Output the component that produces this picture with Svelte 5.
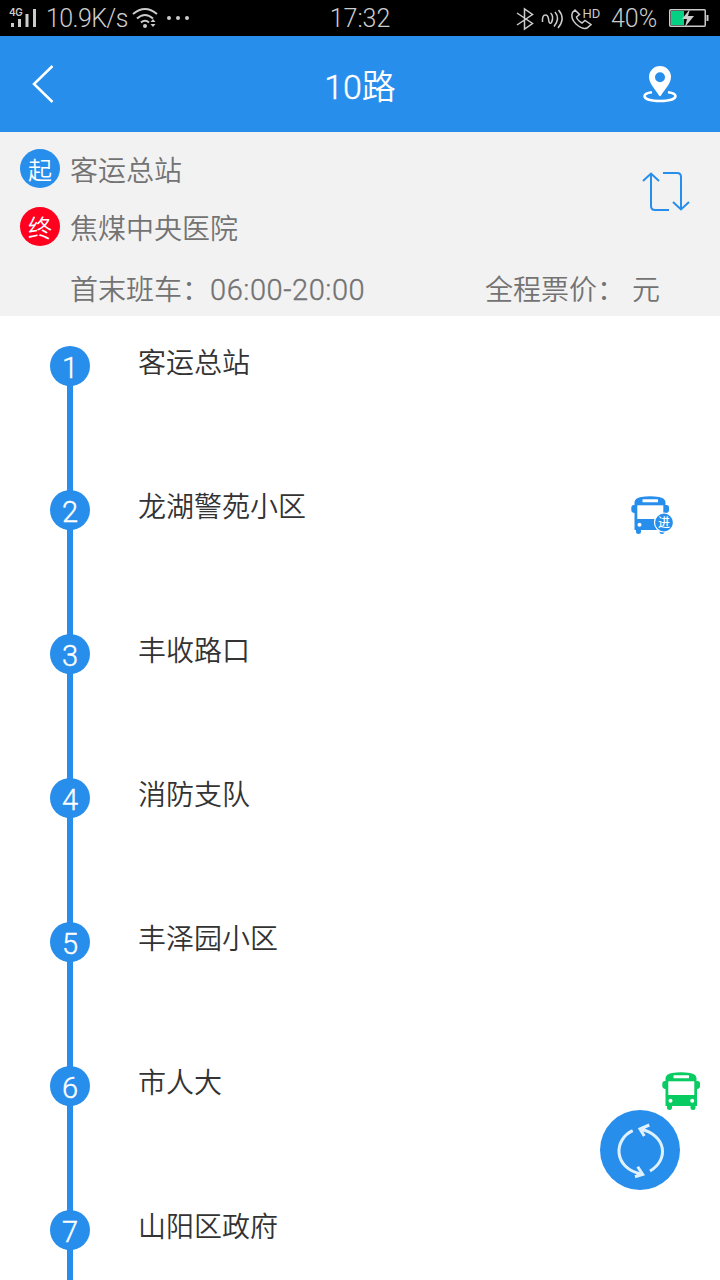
<script>
  const stops = [
    { name: '客运总站' },
    { name: '龙湖警苑小区', bus: 'arrived' },
    { name: '丰收路口' },
    { name: '消防支队' },
    { name: '丰泽园小区' },
    { name: '市人大', bus: 'moving' },
    { name: '山阳区政府' }
  ];
</script>

{#snippet busShape()}
  <path d="M3.500 9V6Q4 2 10 1Q19 -.4 28 1Q34 2 34.500 6V9H35.500Q38 9 38 11.500V14Q38 16.500 35 17V34H33.500V35.500Q33.500 38 31 38Q28.500 38 28.500 35.500V34H10V35.500Q10 38 7.500 38Q5 38 5 35.500V34H3.500V17Q.3 16.500 .3 14V11.500Q.3 9 2.500 9Z" />
  <rect class="window" x="6.300" y="9.300" width="26" height="13.700" />
  <rect class="window" x="11.500" y="3.200" width="15.500" height="3" rx=".5" />
  <circle class="window" cx="8.500" cy="28.700" r="2" />
  <circle class="window" cx="30.200" cy="28.700" r="2" />
{/snippet}

<div class="screen">
  <div class="status">
    <div class="left">
      <svg width="29" height="24" viewBox="0 0 29 24">
        <text x="0" y="10" class="net">4G</text>
        <path d="M3.500 17v4M10.500 13v8M18 8v13M25.500 3v18" stroke="#ccc" stroke-width="3" />
      </svg>
      <span class="speed">10.9K/s</span>
      <svg width="28" height="24" viewBox="0 0 28 24" fill="none" stroke="#ccc" stroke-width="2">
        <path d="M1 8Q13 -2 25 8M5 12.500Q13 5.500 21 12.500M9 16.500Q13 13 17 16.500" />
        <circle cx="13" cy="20" r="2" fill="#ccc" stroke="none" />
        <path d="M18.500 16l2.500-3 2.500 3zM18.500 18h5l-2.500 3z" fill="#ccc" stroke="none" />
      </svg>
      <svg class="dots" width="24" height="6" viewBox="0 0 24 6" fill="#ccc">
        <circle cx="3" cy="3" r="2" /><circle cx="12" cy="3" r="2" /><circle cx="21" cy="3" r="2" />
      </svg>
    </div>
    <span class="time">17:32</span>
    <div class="right">
      <svg width="88" height="26" viewBox="0 0 88 26" fill="none" stroke="#ccc" stroke-width="1.500">
        <path d="M3 8L18.500 18.500L10.500 24V4L18.500 9.500L3 20" />
        <path d="M28.500 17Q28 10 31.500 10Q34 10 34.500 14Q35 20 37.500 17.500Q39 15 38.500 11.500Q38 9 36.500 8M41 7Q46.500 13.500 40 21.500M44.500 5Q52 13.500 44 23" />
        <path d="M61 5L58.500 7.500Q56 13 62 19Q69 25 73 23L77 19.500L71 15.500L68 18Q63 15 62.500 12L65.500 9.500Z" />
        <text x="68.500" y="12.500" class="hd">HD</text>
      </svg>
      <span class="percent">40%</span>
      <svg width="41" height="18" viewBox="0 0 41 18">
        <rect x=".75" y=".75" width="35.500" height="16.500" rx="1" fill="none" stroke="#ccc" stroke-width="1.500" />
        <path d="M2 2h13v14H2z" fill="#04d184" />
        <path d="M21 0L13 10h5l-2 8 9-11h-6z" fill="#ccc" />
        <path d="M38.500 6v6" stroke="#ccc" stroke-width="2" />
      </svg>
    </div>
  </div>

  <header>
    <svg width="24" height="40" viewBox="0 0 24 40" fill="none" stroke="#fff" stroke-width="2.500">
      <path d="M20.500 2L2 20L20.500 38" />
    </svg>
    <h1><span class="num">10</span>路</h1>
    <svg width="34" height="38" viewBox="0 0 34 38">
      <path fill="#fff" fill-rule="evenodd" d="M17 1A11 11 0 0 0 6 12C6 19 13 25 15.800 30.300Q17 32 18.200 30.300C21 25 28 19 28 12A11 11 0 0 0 17 1M17 7.200a5 5 0 1 1 0 10a5 5 0 1 1 0-10" />
      <path d="M9 27.300C3 28 1.500 30 1.500 31C1.500 34 8 36 17 36S32.500 34 32.500 31C32.500 30 31 28 25 27.300" fill="none" stroke="#fff" stroke-width="2.500" />
    </svg>
  </header>

  <section class="summary">
    <div class="route">
      <div class="ends">
        <div class="end"><b>起</b><span>客运总站</span></div>
        <div class="end"><b class="red">终</b><span>焦煤中央医院</span></div>
      </div>
      <svg width="48" height="40" viewBox="0 0 48 40" fill="none" stroke="#288eec" stroke-width="2">
        <path d="M1 9L9 1.500L17 9M9 2V34Q9 38 13 38H27M21 1H35Q39 1 39 5V37M31 30L39 37.500L47 30" />
      </svg>
    </div>
    <div class="info">
      <span>首末班车：<span class="hours">06:00-20:00</span></span>
      <span class="fare">全程票价：<span>元</span></span>
    </div>
  </section>

  <main>
    {#each stops as stop, i}
      <div class="stop">
        <div class="track"><i>{i + 1}</i></div>
        <span class="name">{stop.name}</span>
        {#if stop.bus === 'arrived'}
          <svg class="bus blue" width="43" height="40" viewBox="0 0 43 40">
            {@render busShape()}
            <circle cx="33" cy="26.500" r="9.500" stroke="#fff" stroke-width="1.200" />
            <text x="33" y="31.200" class="tag">进</text>
          </svg>
        {:else if stop.bus === 'moving'}
          <svg class="bus green" width="38" height="40" viewBox="0 0 38 40">{@render busShape()}</svg>
        {/if}
      </div>
    {/each}
  </main>

  <svg class="refresh" width="80" height="80" viewBox="0 0 80 80" fill="none" stroke="#dff1ff" stroke-width="3">
    <circle cx="40" cy="40" r="40" fill="#288eec" stroke="none" />
    <path d="M32.700 20.700C14 29 12 58 42 64.300M35 66.700L42.700 64.300L37.700 56.700M50 61C69 50 67 25 40 19M49.300 15L40 19L44.300 26" />
  </svg>
</div>

<style>
  :global(body) { margin: 0; background: #fff; }
  .screen {
    position: relative;
    width: 720px;
    height: 1280px;
    overflow: hidden;
    background: #fff;
    color: #333;
    font: 350 28px/40px 'Noto Sans CJK SC', sans-serif;
  }
  svg { display: block; flex: none; }
  .status {
    display: grid;
    grid-template-columns: 1fr auto 1fr;
    grid-template-rows: 36px;
    align-items: center;
    height: 36px;
    background: #000;
    color: #ccc;
    font: 300 25px/38px Roboto, sans-serif;
  }
  .left, .right { display: flex; align-items: center; height: 36px; }
  .status span { padding-top: 1px; }
  .left { padding-left: 9px; }
  .right { justify-content: flex-end; padding-right: 10px; }
  .speed { width: 81px; margin: 0 5px 0 8px; white-space: nowrap; letter-spacing: -.6px; }
  .dots { margin-left: 6px; }
  .percent { width: 48px; margin: 0 10px 0 9px; letter-spacing: 0; }
  .right > svg:first-child { margin-left: -4px; }
  .net { font: 600 10px Inter, sans-serif; fill: #ccc; letter-spacing: -.5px; }
  .hd { font: 400 13px Roboto, sans-serif; fill: #ccc; stroke: none; }
  header {
    display: grid;
    grid-template-columns: 1fr auto 1fr;
    grid-template-rows: 96px;
    align-items: center;
    height: 96px;
    box-sizing: border-box;
    padding: 0 43px 0 32px;
    background: #288eec;
    color: #fff;
  }
  header svg:last-child { justify-self: end; }
  h1 { margin: 0 -11px 0 0; padding-top: 3px; font-size: 34px; font-weight: 350; line-height: 93px; }
  .num { font-family: Roboto, sans-serif; font-weight: 300; -webkit-text-stroke: .4px; }
  .summary { height: 184px; box-sizing: border-box; padding-top: 17px; background: #f2f2f2; color: #737373; }
  .route { display: flex; justify-content: space-between; padding: 0 30px 0 20px; }
  .route > svg { margin-top: 23px; }
  .end { display: flex; gap: 10px; height: 58px; }
  .end b {
    width: 40px;
    height: 39px;
    border-radius: 50%;
    background: #288eec;
    color: #fff;
    font-size: 24px;
    font-weight: 350;
    text-align: center;
    line-height: 39px;
  }
  .end .red { background: #ff001f; }
  .info { display: flex; justify-content: space-between; padding: 3px 60px 0 70px; }
  .hours { font: 300 29px/38px Roboto, sans-serif; letter-spacing: .55px; -webkit-text-stroke: .35px; }
  .fare span { margin-left: 7px; }
  main { padding-top: 30px; }
  .stop { display: flex; height: 144px; padding-left: 50px; }
  .track {
    width: 40px;
    background: linear-gradient(#288eec, #288eec) center / 6px 100% no-repeat;
  }
  .stop i {
    display: block;
    height: 40px;
    border-radius: 50%;
    background: #288eec;
    color: #fff;
    font: 300 29px/44px Roboto, sans-serif;
    -webkit-text-stroke: .4px;
    text-align: center;
  }
  .stop:first-child .track { background-position: center 20px; }
  .name { margin: -5px 0 0 48px; }
  .bus { margin-left: auto; margin-top: 6px; }
  .blue { fill: #288eec; margin-right: 46px; }
  .green { fill: #08cb62; margin-right: 20px; }
  .window { fill: #fff; }
  .tag { fill: #fff; font-size: 12px; font-weight: 500; text-anchor: middle; }
  .refresh { position: absolute; left: 600px; top: 1110px; }
</style>
